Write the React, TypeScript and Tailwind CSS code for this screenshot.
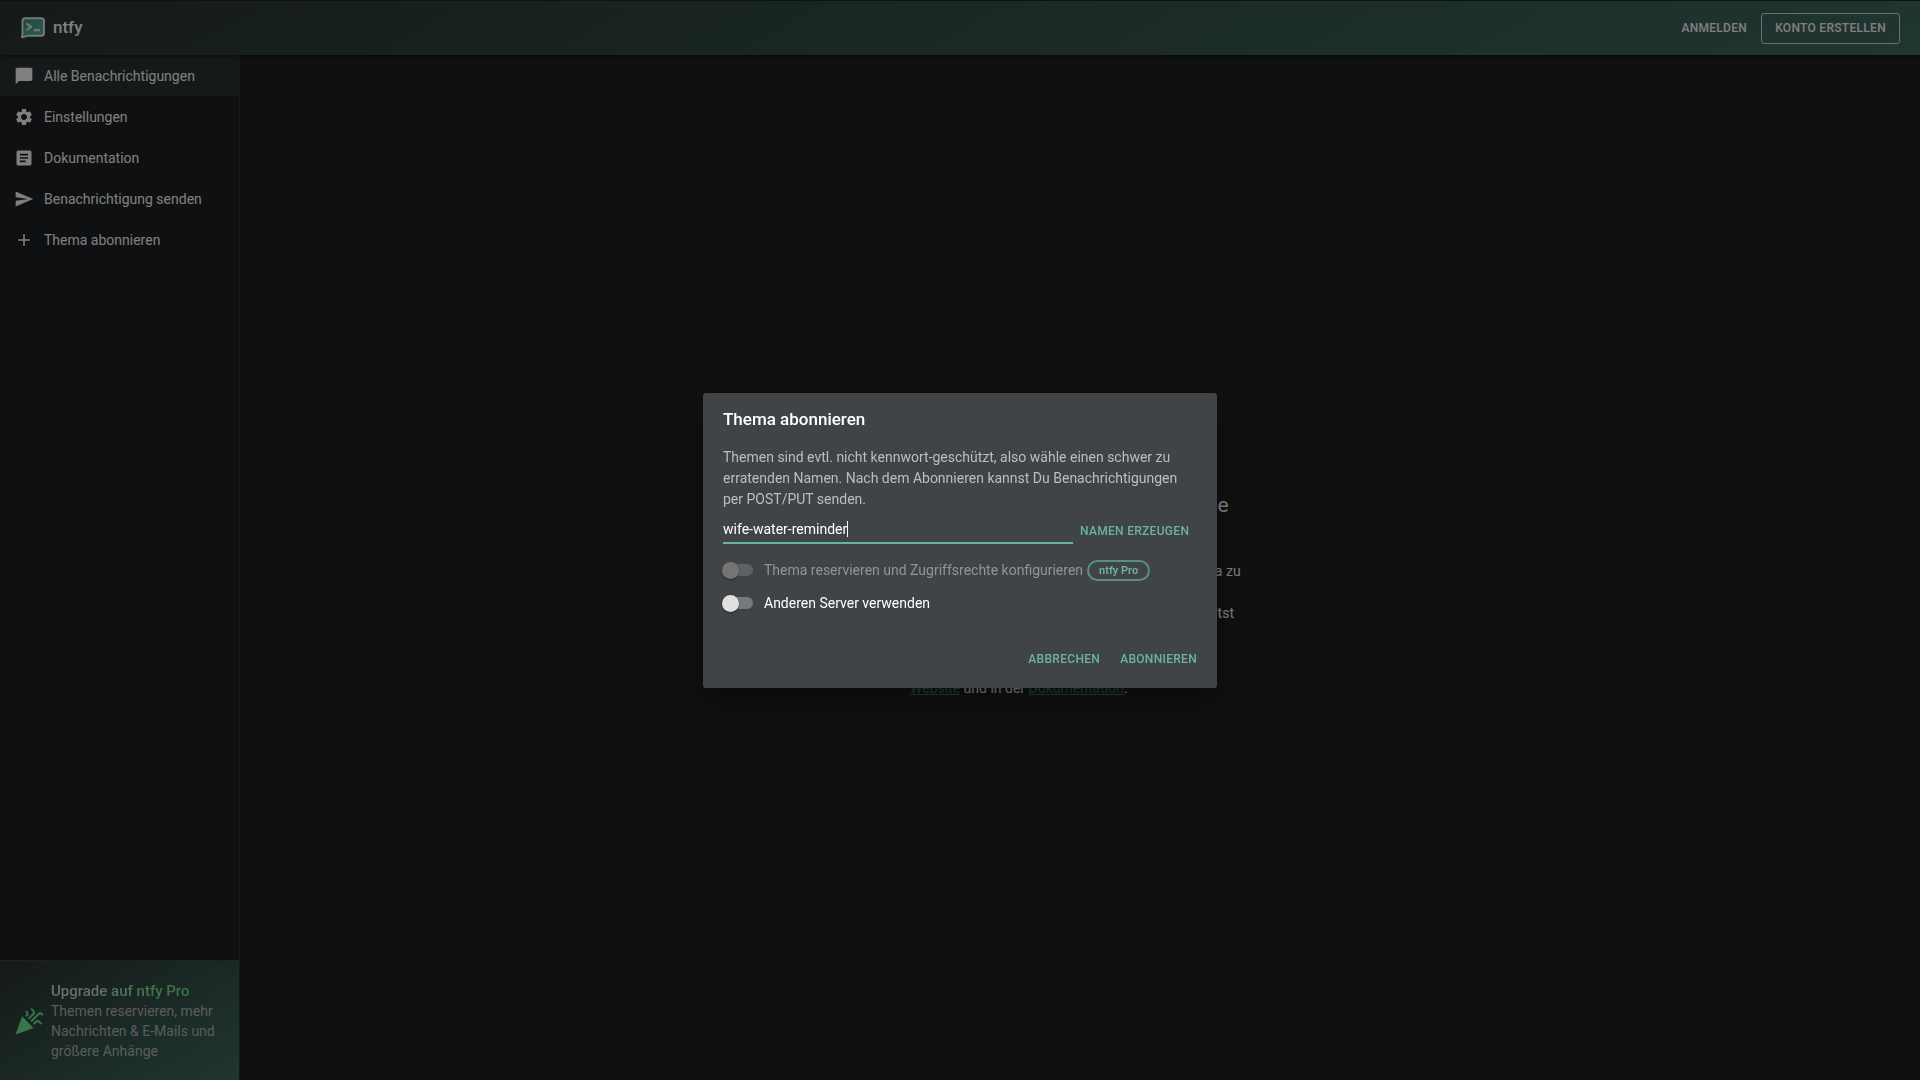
import React, { useState } from 'react';
import {
  MdAdd,
  MdArticle,
  MdCelebration,
  MdChatBubble,
  MdSend,
  MdSettings,
} from 'react-icons/md';

const navItems = [
  { label: 'Alle Benachrichtigungen', icon: MdChatBubble, active: true },
  { label: 'Einstellungen', icon: MdSettings },
  { label: 'Dokumentation', icon: MdArticle },
  { label: 'Benachrichtigung senden', icon: MdSend },
  { label: 'Thema abonnieren', icon: MdAdd },
];

const Logo = ({ className }: { className: string }) => (
  <svg viewBox="0 0 24 22" className={className} aria-hidden="true">
    <defs>
      <linearGradient id="logo" x1="0" y1="0" x2="1" y2="1">
        <stop offset="0" stopColor="#3d8f7e" />
        <stop offset="1" stopColor="#56bda8" />
      </linearGradient>
    </defs>
    <path
      d="M4 1.2h16.4c1.5 0 2.6 1.1 2.6 2.6v12.4c0 1.5-1.1 2.6-2.6 2.6H6.2L1 20.4l.5-3.6V3.8c0-1.5 1-2.6 2.5-2.6z"
      fill="url(#logo)"
      stroke="#eee"
      strokeWidth="1.9"
      strokeLinejoin="round"
    />
    <path d="M5.4 5.2l5.6 3.7v1.6l-5.6 3.7v-2.5l3.2-2-3.2-2z" fill="#eee" />
    <path d="M12.6 13.2h6.4" stroke="#eee" strokeWidth="2.2" />
  </svg>
);

const Header = () => (
  <header className="relative z-10 flex h-[55px] items-center border-t border-[#1c2422] bg-linear-[150deg,#2a3431_0%,#416d61_100%] pr-5 pl-[21px] shadow-[0_2px_5px_rgba(0,0,0,0.5)]">
    <Logo className="h-[22px] w-6" />
    <h1 className="ml-2 grow text-[17px] font-medium text-white">ntfy</h1>
    <div className="flex items-center gap-3.5">
      <button className="text-xs font-medium tracking-wide text-white uppercase">Anmelden</button>
      <button className="h-[31px] rounded-[3px] border border-white/80 px-[13px] text-xs font-medium tracking-wide text-white uppercase">
        Konto erstellen
      </button>
    </div>
  </header>
);

const Sidebar = () => (
  <nav className="flex w-60 shrink-0 flex-col border-r border-[#303134] bg-[#1e2024]">
    <ul className="grow">
      {navItems.map(({ label, icon: Icon, active }) => (
        <li key={label}>
          <a
            href="#"
            className={`flex h-[41px] items-center gap-2.5 px-3.5 text-sm text-white ${active ? 'bg-[#283434]' : ''}`}
          >
            <Icon size={20} />
            {label}
          </a>
        </li>
      ))}
    </ul>
    <a
      href="#"
      className="flex items-center gap-[7px] border-t border-[#36443f] bg-linear-[150deg,#2a3431_0%,#416d61_100%] px-[13px] pt-5 pb-[19px]"
    >
      <MdCelebration size={31} className="shrink-0 text-[#70ea94]" />
      <span>
        <span className="block w-fit bg-linear-to-r from-[#dedede] from-10% to-[#70ea94] to-80% bg-clip-text text-[15px] leading-5 font-medium text-transparent">
          Upgrade auf ntfy Pro
        </span>
        <span className="block text-sm leading-5 text-[#b4b8b6]">
          Themen reservieren, mehr Nachrichten &amp; E-Mails und größere Anhänge
        </span>
      </span>
    </a>
  </nav>
);

const EmptyState = () => (
  <main className="flex grow flex-col items-center justify-center text-white">
    <div className="w-[340px] text-sm leading-[21px]">
      <Logo className="mx-auto h-[54px] w-14" />
      <h2 className="text-center text-[21px] leading-7 whitespace-nowrap">
        Es sind anscheinend noch keine
        <br />
        Themen abonniert.
      </h2>
      <p className="pt-3.5 whitespace-nowrap">
        Bitte klicke auf „Thema abonnieren“ um ein Thema zu
        <br />
        erstellen oder zu abonnieren. Danach kannst
        <br />
        Du Nachrichten über PUT/POST senden und erhältst
        <br />
        hier Benachrichtigungen.
      </p>
      <p className="pt-3">
        Weitere Informationen findest Du auf der
        <br />
        <a href="#" className="text-[#3a8070] underline">Website</a> und in der{' '}
        <a href="#" className="text-[#3a8070] underline">Dokumentation</a>.
      </p>
    </div>
  </main>
);

type SwitchProps = {
  id: string;
  label: string;
  disabled?: boolean;
  children?: React.ReactNode;
};

const Switch = ({ id, label, disabled, children }: SwitchProps) => (
  <div className="flex h-[33px] items-center">
    <input
      id={id}
      type="checkbox"
      role="switch"
      disabled={disabled}
      className="mr-[11px] flex h-3 w-[30px] appearance-none items-center rounded-full bg-[#76797b] before:-ml-px before:size-[17px] before:shrink-0 before:rounded-full before:bg-[#e0e0e0] before:shadow-[0_1px_2px_rgba(0,0,0,0.4)] checked:before:ml-3.5 disabled:bg-[#5f6264] disabled:before:bg-[#757575]"
    />
    <label htmlFor={id} className={`text-sm ${disabled ? 'text-[#929496]' : 'text-white'}`}>
      {label}
    </label>
    {children}
  </div>
);

const SubscribeDialog = () => {
  const [topic, setTopic] = useState('wife-water-reminder');

  return (
    <div className="fixed inset-0 z-50 flex items-center justify-center bg-black/50">
      <div
        role="dialog"
        aria-labelledby="dialog-title"
        className="w-[514px] rounded-[3px] bg-[#414446] px-5 pt-[13px] pb-[17px] shadow-[0_9px_13px_-6px_rgba(0,0,0,0.2),0_20px_33px_3px_rgba(0,0,0,0.14),0_8px_40px_7px_rgba(0,0,0,0.12)]"
      >
        <h2 id="dialog-title" className="text-[17px] leading-[27px] font-medium text-white">
          Thema abonnieren
        </h2>
        <p className="pt-3.5 text-sm leading-[21px] text-[#bcbebf]">
          Themen sind evtl. nicht kennwort-geschützt, also wähle einen schwer zu erratenden Namen.
          Nach dem Abonnieren kannst Du Benachrichtigungen per POST/PUT senden.
        </p>
        <div className="flex items-end pt-[7px]">
          <div className="flex h-[27px] w-[350px] items-center border-b-2 border-[#6ab3a2]">
            <input
              type="text"
              aria-label="Thema"
              value={topic}
              onChange={(e) => setTopic(e.target.value)}
              className="field-sizing-content text-sm text-white caret-transparent outline-none"
            />
            <span className="h-4 w-px bg-white" />
          </div>
          <button className="ml-[7px] h-[25px] text-xs font-medium tracking-wide text-[#6ab3a2] uppercase">
            Namen erzeugen
          </button>
        </div>
        <div className="pt-2.5">
          <Switch id="reserve" label="Thema reservieren und Zugriffsrechte konfigurieren" disabled>
            <span className="ml-1 rounded-full border-2 border-[#568f83] px-2.5 text-[11px] leading-[17px] font-semibold text-[#6ab3a2]">
              ntfy Pro
            </span>
          </Switch>
          <Switch id="server" label="Anderen Server verwenden" />
        </div>
        <div className="flex justify-end gap-5 pt-[27px]">
          <button className="h-6 text-xs font-medium tracking-wide text-[#6ab3a2] uppercase">Abbrechen</button>
          <button className="h-6 text-xs font-medium tracking-wide text-[#6ab3a2] uppercase">Abonnieren</button>
        </div>
      </div>
    </div>
  );
};

const App = () => {
  return (
    <div className="flex min-h-screen flex-col bg-[#212121] font-[Roboto,sans-serif]">
      <Header />
      <div className="flex grow">
        <Sidebar />
        <EmptyState />
      </div>
      <SubscribeDialog />
    </div>
  );
};

export default App;
